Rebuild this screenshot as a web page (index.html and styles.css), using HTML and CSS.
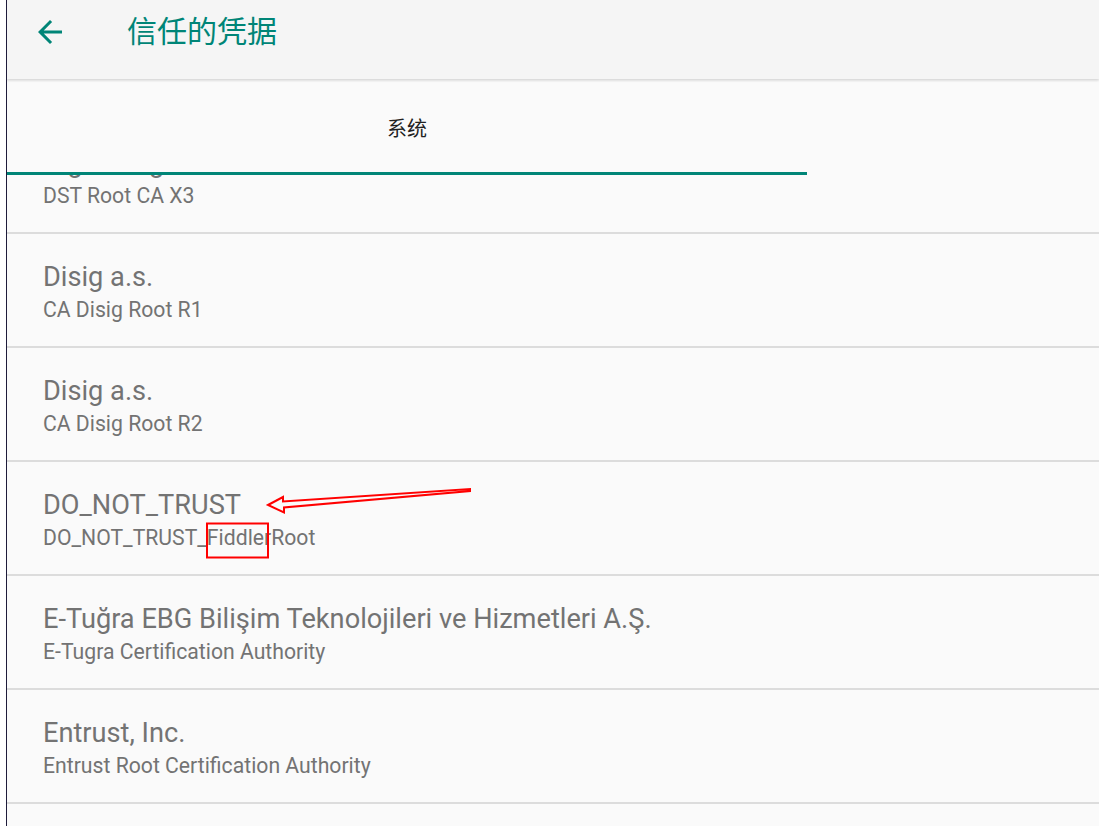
FILE: index.html
```html
<!DOCTYPE html>
<html lang="zh-CN">
<head>
<meta charset="utf-8">
<title>信任的凭据</title>
<link rel="stylesheet" href="styles.css">
</head>
<body>
<div class="edge"></div>
<div class="app">
  <header class="appbar">
    <svg class="back" viewBox="0 0 24 24" aria-hidden="true"><path d="M20 11H7.83l5.59-5.59L12 4l-8 8 8 8 1.41-1.41L7.83 13H20v-2z"/></svg>
    <h1 class="title">信任的凭据</h1>
  </header>
  <div class="content">
    <nav class="tabs">
      <div class="tab active">系统</div>
    </nav>
    <ul class="list">
      <li class="item"><div class="item-title">Digital Signature Trust Co.</div><div class="item-sub">DST Root CA X3</div></li>
      <li class="item"><div class="item-title">Disig a.s.</div><div class="item-sub">CA Disig Root R1</div></li>
      <li class="item"><div class="item-title">Disig a.s.</div><div class="item-sub">CA Disig Root R2</div></li>
      <li class="item"><div class="item-title">DO_NOT_TRUST</div><div class="item-sub">DO_NOT_TRUST_FiddlerRoot</div></li>
      <li class="item"><div class="item-title">E-Tuğra EBG Bilişim Teknolojileri ve Hizmetleri A.Ş.</div><div class="item-sub">E-Tugra Certification Authority</div></li>
      <li class="item"><div class="item-title">Entrust, Inc.</div><div class="item-sub">Entrust Root Certification Authority</div></li>
    </ul>
  </div>
</div>
<svg class="annot" viewBox="0 0 1099 826" aria-hidden="true">
  <polygon points="268,505 283,497 283,501.5 470,489 470,491 284,507.5 284,512.5" fill="none" stroke="#ff0000" stroke-width="2" stroke-linejoin="miter"/>
  <rect x="207" y="523.5" width="61" height="34" fill="none" stroke="#ff0000" stroke-width="2"/>
</svg>
</body>
</html>
```

FILE: styles.css
```css
* { box-sizing: border-box; }
html, body {
  margin: 0;
  padding: 0;
  height: 100%;
  overflow: hidden;
  background: #ffffff;
}
body {
  display: flex;
  font-family: Roboto, "Noto Sans", "Noto Sans CJK SC", sans-serif;
}
.edge {
  width: 7px;
  flex: 0 0 7px;
  background: #ffffff;
  border-right: 1px solid #1e1b3a;
}
.app {
  flex: 1;
  display: flex;
  flex-direction: column;
  background: #fafafa;
  height: 826px;
  overflow: hidden;
}
.appbar {
  position: relative;
  z-index: 3;
  height: 79px;
  flex: 0 0 79px;
  padding-bottom: 18px;
  display: flex;
  align-items: center;
  background: #f5f5f5;
  box-shadow: 0 1px 3px rgba(0,0,0,0.12), 0 2px 2px rgba(0,0,0,0.05);
}
.back {
  width: 36px;
  height: 36px;
  margin-left: 25px;
  margin-top: 2px;
  fill: #008577;
}
.title {
  margin: 0 0 0 59px;
  font-family: "Noto Sans CJK SC", sans-serif;
  font-weight: 400;
  font-size: 30px;
  line-height: 40px;
  color: #008577;
  position: relative;
  top: -2px;
}
.content {
  flex: 1;
  display: flex;
  flex-direction: column;
  overflow: hidden;
}
.tabs {
  position: relative;
  z-index: 2;
  height: 96px;
  flex: 0 0 96px;
  display: flex;
  background: #fafafa;
}
.tab {
  width: 800px;
  display: flex;
  align-items: center;
  justify-content: center;
  padding-top: 3px;
  font-family: "Noto Sans CJK SC", sans-serif;
  font-size: 20px;
  color: #212121;
}
.tab.active {
  border-bottom: 3px solid #008577;
}
.list {
  list-style: none;
  margin: -55px 0 0 0;
  padding: 0;
}
.item {
  height: 114px;
  padding: 27px 0 0 36px;
  border-bottom: 2px solid #dcdcdc;
  color: #737373;
}
.item-title {
  font-size: 27.2px;
  line-height: 32px;
  white-space: nowrap;
}
.item-sub {
  margin-top: 4px;
  font-size: 21.2px;
  line-height: 26px;
  white-space: nowrap;
}
.annot {
  position: absolute;
  left: 0;
  top: 0;
  width: 1099px;
  height: 826px;
  pointer-events: none;
  z-index: 10;
}
```
